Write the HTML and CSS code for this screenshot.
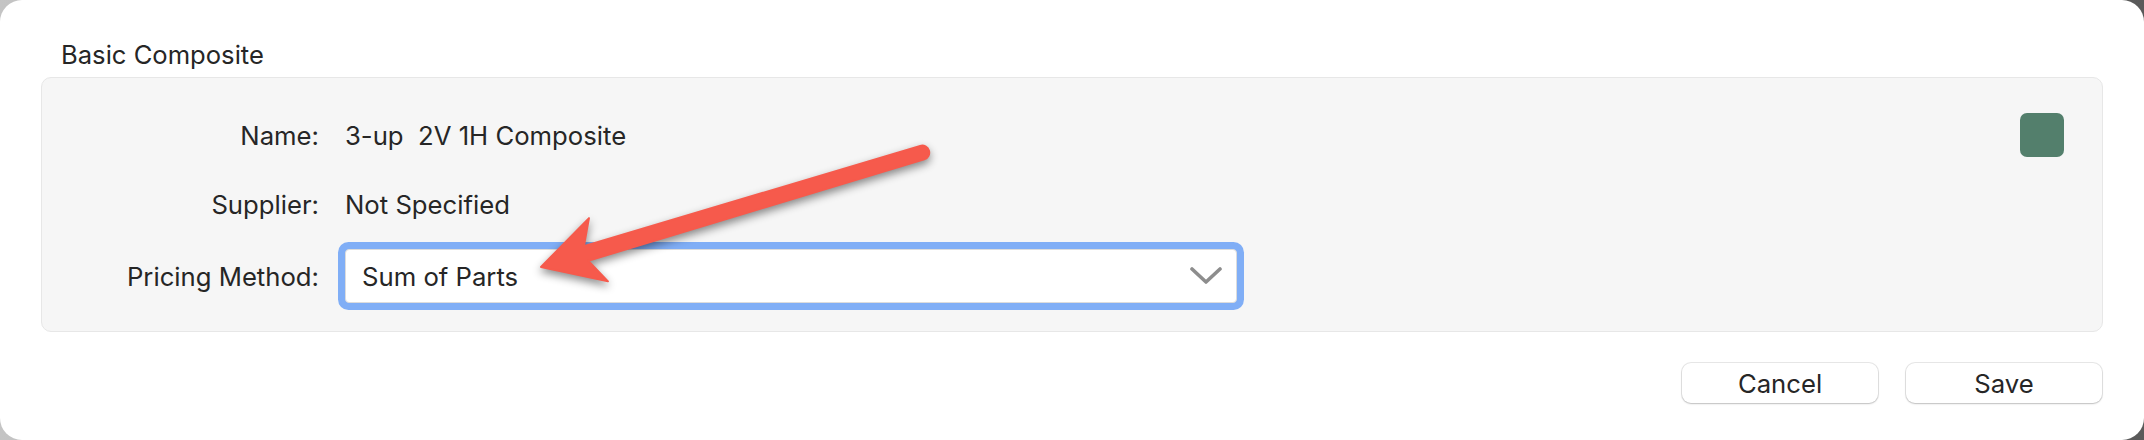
FILE: index.html
```html
<!DOCTYPE html>
<html>
<head>
<meta charset="utf-8">
<link rel="stylesheet" href="styles.css">
</head>
<body>
<div class="window">
  <div class="title">Basic Composite</div>
  <div class="panel">
    <div class="row row-name">
      <div class="label">Name:</div>
      <div class="value">3-up  2V 1H Composite</div>
      <div class="swatch"></div>
    </div>
    <div class="row row-supplier">
      <div class="label">Supplier:</div>
      <div class="value">Not Specified</div>
    </div>
    <div class="row row-pricing">
      <div class="label">Pricing Method:</div>
      <div class="select">
        <span class="select-text">Sum of Parts</span>
        <svg class="chevron" width="32" height="20" viewBox="0 0 32 20"><path d="M2 3 L16 16 L30 3" fill="none" stroke="#8d8d8d" stroke-width="3.6" stroke-linecap="round" stroke-linejoin="round"/></svg>
      </div>
    </div>
  </div>
  <div class="footer">
    <div class="button">Cancel</div>
    <div class="button">Save</div>
  </div>
  <svg class="arrow" width="2144" height="440" viewBox="0 0 2144 440">
    <g transform="translate(541 267) rotate(-16.7)">
      <path d="M0 0 L60 -33 L47 -7.5 L398 -7 A7 7 0 0 1 398 7 L47 7.5 L60 33 Z" fill="#f65a4c" stroke="#f65a4c" stroke-width="2" stroke-linejoin="round"/>
    </g>
  </svg>
</div>
</body>
</html>
```
FILE: styles.css
```css
html, body {
  margin: 0;
  padding: 0;
}
body {
  width: 2144px;
  height: 440px;
  background: linear-gradient(to right, #c4c4c4, #5a5a5a);
  font-family: "Inter", "Liberation Sans", sans-serif;
  color: #262626;
  overflow: hidden;
}
.window {
  position: relative;
  box-sizing: border-box;
  width: 2144px;
  height: 440px;
  background: #ffffff;
  border-radius: 22px;
  padding: 39px 41px 0 41px;
}
.title {
  font-size: 25.6px;
  line-height: 32px;
  margin-left: 20px;
}
.panel {
  box-sizing: border-box;
  margin-top: 6px;
  height: 255px;
  background: #f6f6f6;
  border: 1px solid #e7e7e7;
  border-radius: 10px;
  padding-top: 37px;
}
.row {
  display: flex;
  align-items: center;
  font-size: 25.7px;
  height: 40px;
}
.row-supplier {
  margin-top: 29px;
}
.row-pricing {
  margin-top: 25px;
  height: 54px;
}
.label {
  width: 277px;
  text-align: right;
  flex: none;
}
.value {
  margin-left: 26px;
  white-space: pre;
}
.swatch {
  margin-left: auto;
  margin-right: 38px;
  width: 44px;
  height: 44px;
  border-radius: 7px;
  background: #537f6c;
}
.select {
  margin-left: 26px;
  box-sizing: border-box;
  width: 892px;
  height: 54px;
  background: #ffffff;
  border: 1px solid #dcdcdc;
  border-radius: 4px;
  box-shadow: 0 0 0 7px #80aef6;
  display: flex;
  align-items: center;
  padding-left: 16px;
  padding-right: 14px;
}
.select-text {
  flex: 1;
}
.chevron {
  display: block;
}
.footer {
  display: flex;
  justify-content: flex-end;
  gap: 28px;
  margin-top: 31px;
  margin-right: 1px;
}
.button {
  width: 196px;
  height: 40px;
  box-sizing: border-box;
  background: #ffffff;
  border-radius: 9px;
  box-shadow: 0 0 0 1px rgba(0,0,0,0.09), 0 1px 2px rgba(0,0,0,0.18);
  font-size: 25.7px;
  line-height: 41px;
  text-align: center;
}
.arrow {
  position: absolute;
  left: 0;
  top: 0;
  pointer-events: none;
  filter: drop-shadow(0 4px 4px rgba(0,0,0,0.45));
}
```
